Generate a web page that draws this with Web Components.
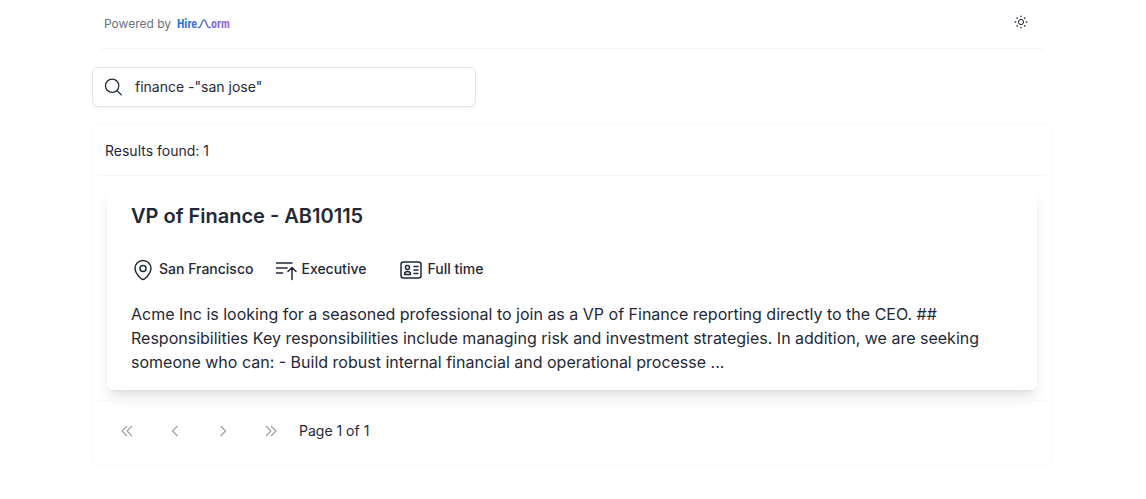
<!DOCTYPE html>
<html lang="en">
<head>
<meta charset="utf-8">
<meta name="viewport" content="width=device-width, initial-scale=1">
<title>Job search</title>
<style>
body{margin:0;padding:0 2px 32px 0;background:#fff;color:#1f2937;font:14px/20px Inter,"Liberation Sans",sans-serif}
</style>
</head>
<body>
<job-board>
  <site-header slot="header"></site-header>
  <search-box slot="search" value='finance -"san jose"'></search-box>
  <results-panel>
    <span slot="count">Results found: 1</span>
    <job-card>
      <span slot="title">VP of Finance - AB10115</span>
      <job-fact slot="facts" icon="pin">San Francisco</job-fact>
      <job-fact slot="facts" icon="level">Executive</job-fact>
      <job-fact slot="facts" icon="id">Full time</job-fact>
      Acme Inc is looking for a seasoned professional to join as a VP of Finance reporting directly to the CEO. ## Responsibilities Key responsibilities include managing risk and investment strategies. In addition, we are seeking someone who can: - Build robust internal financial and operational processe ...
    </job-card>
    <page-nav slot="footer">Page 1 of 1</page-nav>
  </results-panel>
</job-board>
<script>
const define = (name, html, setup) => customElements.define(name, class extends HTMLElement {
  connectedCallback() {
    if (this.shadowRoot) return;
    const t = document.createElement('template');
    t.innerHTML = html;
    this.attachShadow({mode: 'open'}).append(t.content.cloneNode(true));
    if (setup) setup(this, this.shadowRoot);
  }
});

define('job-board', `
<style>
:host{display:block;box-sizing:border-box;max-width:960px;margin:0 auto}
main{display:flex;flex-direction:column;gap:16px;padding-top:18px}
</style>
<slot name="header"></slot>
<main><slot name="search"></slot><slot></slot></main>`);

define('site-header', `
<style>
:host{display:block;padding:0 8px}
header{display:flex;justify-content:space-between;align-items:center;height:48px;padding:0 12px 0 4px;border-bottom:1px solid #f7f7f8}
.brand{display:flex;align-items:center;gap:6px;font-size:12px;line-height:16px;color:#6b7280}
a{display:flex;align-items:center;text-decoration:none}
button{display:flex;padding:4px;border:0;background:none;color:#1f2937;margin-bottom:4px}
svg{display:block}
</style>
<header>
  <div class="brand">Powered by
    <a href="#" aria-label="HireNorm">
      <svg width="56" height="16" viewBox="0 0 56 16">
        <defs><linearGradient id="g" gradientUnits="userSpaceOnUse" x1="0" y1="0" x2="54" y2="0"><stop offset="0" stop-color="#1976d2"/><stop offset=".5" stop-color="#6272e0"/><stop offset="1" stop-color="#a56be0"/></linearGradient></defs>
        <g font-family="'Liberation Sans Narrow','Roboto Condensed','DejaVu Sans Condensed',sans-serif" font-weight="700" font-size="12" fill="url(#g)"><text x="0" y="12">Hire</text><text x="34" y="12">orm</text></g>
        <path d="M20.500 11.500H22c2.500 0 2.500-7.500 5-7.500s2.500 7.500 5 7.500h2" fill="none" stroke="url(#g)" stroke-width="1.500"/>
      </svg>
    </a>
  </div>
  <button type="button" aria-label="Toggle theme">
    <svg width="14" height="14" viewBox="0 0 14 14" fill="none" stroke="currentColor"><circle cx="7" cy="7" r="2.600"/><path stroke-width="1.300" stroke-linecap="round" d="M7 1.200v.5M7 12.300v.5M1.200 7h.5M12.300 7h.5M3 3l.3.300M10.700 10.700l.3.300M3 11l.3-.3M10.700 3.300l.3-.3"/></svg>
  </button>
</header>`);

define('search-box', `
<style>
:host{display:block;max-width:384px}
label{display:flex;align-items:center;gap:12px;box-sizing:border-box;height:40px;padding:0 10px;border:1px solid #e5e7eb;border-radius:6px;box-shadow:0 1px 2px rgba(0,0,0,.06);background:#fff}
svg{flex:none}
input{flex:1;min-width:0;padding:0;border:0;outline:0;background:none;color:inherit;font:inherit}
</style>
<label>
  <svg width="20" height="20" viewBox="0 0 24 24" fill="none" stroke="currentColor" stroke-width="1.500" stroke-linecap="round"><circle cx="11" cy="10.500" r="8"/><path d="M17 16.500 22 21.500"/></svg>
  <input type="text" aria-label="Search jobs">
</label>`, (host, root) => { root.querySelector('input').value = host.getAttribute('value') || ''; });

define('results-panel', `
<style>
:host{display:block}
section{border:1px solid #f9f9fa;border-radius:8px;padding:0 4px}
header{padding:17px 8px 14px;border-bottom:1px solid #f7f7f8}
.list{padding:10px}
footer{border-top:1px solid #f7f7f8;padding:10px 10px 14px}
</style>
<section>
  <header><slot name="count"></slot></header>
  <div class="list"><slot></slot></div>
  <footer><slot name="footer"></slot></footer>
</section>`);

define('job-card', `
<style>
:host{display:block}
article{padding:16px 24px;border-radius:6px;background:#fff;box-shadow:0 10px 15px -3px rgba(0,0,0,.1),0 4px 6px -4px rgba(0,0,0,.1)}
h2{margin:0;font-size:20px;line-height:28px;font-weight:600}
.facts{display:flex;flex-wrap:wrap;gap:20px;margin:28px 0 20px}
p{margin:0;font-size:16px;line-height:24px;font-weight:400}
</style>
<article>
  <h2><slot name="title"></slot></h2>
  <div class="facts"><slot name="facts"></slot></div>
  <p><slot></slot></p>
</article>`);

const icons = {
  pin: '<circle cx="12" cy="10.500" r="3"/><path d="M12 21.500c-1.500 0-8-5.500-8-11a8 8 0 0 1 16 0c0 5.500-6.500 11-8 11Z"/>',
  level: '<path d="M3.500 5H19M3.500 10H14M3.500 15H9.500M19 21.500V10M15 13.500 19 9.500l4 4"/>',
  id: '<rect x="2" y="4" width="20" height="16" rx="2.500"/><circle cx="8.500" cy="9.500" r="2"/><path d="M5.500 16.500c0-4 6-4 6 0ZM15 8.500h4M15 12h4M15 15.500h4"/>'
};
define('job-fact', `
<style>
:host{display:block;min-width:106px}
div{display:flex;align-items:center;gap:4px;font-weight:500}
span{padding-bottom:2px}
svg{display:block}
</style>
<div><svg width="24" height="24" viewBox="0 0 24 24" fill="none" stroke="currentColor" stroke-width="1.500" stroke-linecap="round" stroke-linejoin="round"></svg><span><slot></slot></span></div>`,
(host, root) => { root.querySelector('svg').innerHTML = icons[host.getAttribute('icon')]; });

define('page-nav', `
<style>
:host{display:block}
nav{display:flex;align-items:center;gap:8px}
button{display:grid;place-items:center;width:40px;height:40px;padding:0;border:0;background:none;color:#1f2937}
button:disabled{opacity:.45}
</style>
<nav aria-label="Pagination">
  <button type="button" disabled aria-label="First page"><svg width="16" height="16" viewBox="0 0 16 16" fill="none" stroke="currentColor" stroke-width="1.100"><path d="M8 3 3 8l5 5M13 3 8 8l5 5"/></svg></button>
  <button type="button" disabled aria-label="Previous page"><svg width="16" height="16" viewBox="0 0 16 16" fill="none" stroke="currentColor" stroke-width="1.100"><path d="M10.500 3 5.500 8l5 5"/></svg></button>
  <button type="button" disabled aria-label="Next page"><svg width="16" height="16" viewBox="0 0 16 16" fill="none" stroke="currentColor" stroke-width="1.100"><path d="M5.500 3l5 5-5 5"/></svg></button>
  <button type="button" disabled aria-label="Last page"><svg width="16" height="16" viewBox="0 0 16 16" fill="none" stroke="currentColor" stroke-width="1.100"><path d="M3 3l5 5-5 5M8 3l5 5-5 5"/></svg></button>
  <span><slot></slot></span>
</nav>`);
</script>
</body>
</html>
